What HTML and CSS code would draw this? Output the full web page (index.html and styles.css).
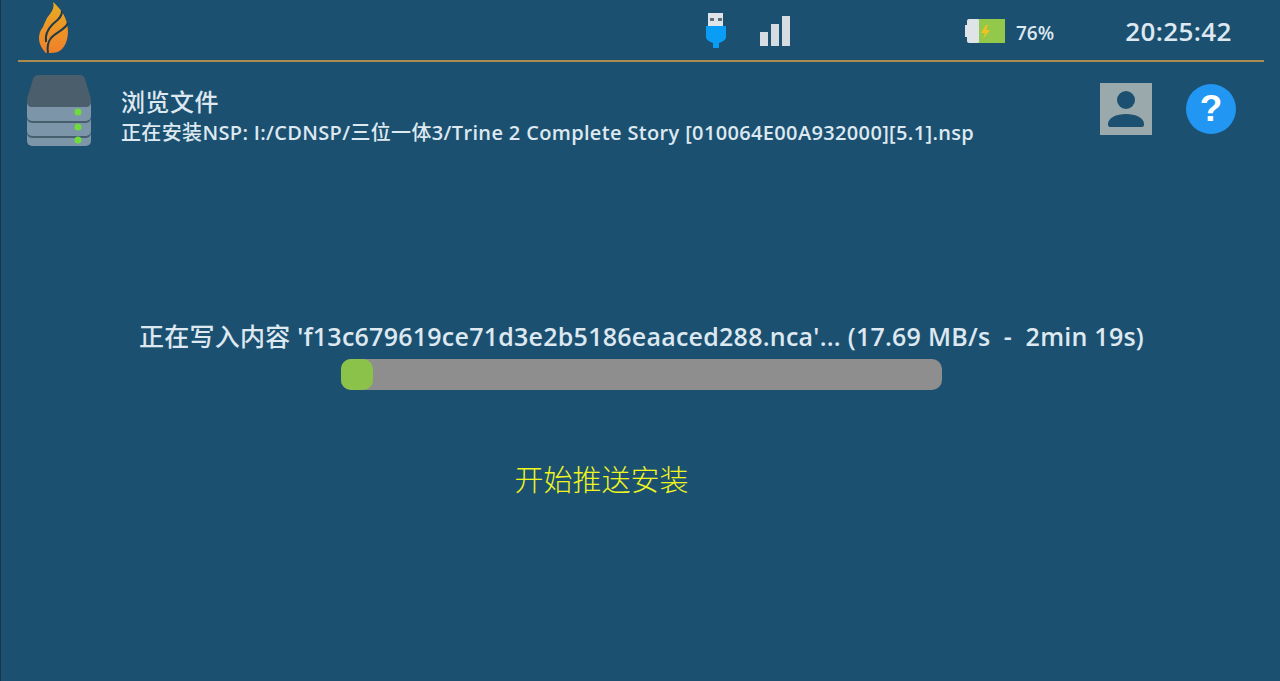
FILE: index.html
```html
<!DOCTYPE html>
<html lang="en">
<head>
    <meta charset="UTF-8">
    <meta name="viewport" content="width=device-width, initial-scale=1.0">
    <title>Install</title>
    <link rel="stylesheet" href="styles.css">
</head>
<body>
    <!-- Status bar -->
    <header class="status-bar">
        <svg class="logo" width="32" height="52" viewBox="0 0 32 52">
            <defs>
                <linearGradient id="flame" x1="0" y1="0" x2="0" y2="1">
                    <stop offset="0" stop-color="#e8ac22"/>
                    <stop offset="1" stop-color="#f0802a"/>
                </linearGradient>
            </defs>
            <path d="M15 0C17 6 13 11 9 16C7 20 6 22 5 25C2 29 1 32 1 36C1 42 4 47 8 51H12C17 51 21 50 24 47C30 41 31 30 29 22C28 14 21 5 15 0Z" fill="url(#flame)"/>
            <path d="M24 9C24 16 18 19 14 23C9 28 7 33 8 40" fill="none" stroke="#1e3a4c" stroke-width="2"/>
            <path d="M30 21C27 28 18 30 13 36C10 40 9 45 10 51" fill="none" stroke="#1e3a4c" stroke-width="2"/>
        </svg>
        <svg class="usb" width="22" height="36" viewBox="0 0 22 36">
            <rect x="3" y="0" width="15" height="14" fill="#dfe4e8"/>
            <rect x="5" y="5" width="4" height="3" fill="#5f6f7a"/>
            <rect x="13" y="5" width="4" height="3" fill="#5f6f7a"/>
            <path d="M1 13H21V24C21 27 17 29 14 30V35H8V30C5 29 1 27 1 24Z" fill="#0a9df5"/>
        </svg>
        <div class="signal">
            <span class="signal-bar bar-low"></span>
            <span class="signal-bar bar-mid"></span>
            <span class="signal-bar bar-high"></span>
        </div>
        <svg class="battery" width="40" height="24" viewBox="0 0 40 24">
            <rect x="0" y="6" width="3" height="12" fill="#dfe4e8"/>
            <rect x="2" y="0" width="13" height="24" rx="2" fill="#dfe4e8"/>
            <rect x="14" y="0" width="26" height="24" fill="#93c94a"/>
            <path d="M21 6L16 14H20L18 20L25 11H21L23 6Z" fill="#f4c21f"/>
        </svg>
        <span class="battery-text">76%</span>
        <span class="clock">20:25:42</span>
    </header>

    <!-- Title row -->
    <section class="title-row">
        <svg class="drive" width="64" height="72" viewBox="0 0 64 72">
            <rect x="0" y="48" width="64" height="23" rx="5" fill="#7c95a8"/>
            <rect x="0" y="44" width="64" height="19" rx="5" fill="#465e6e"/>
            <rect x="0" y="38" width="64" height="23" rx="5" fill="#7c95a8"/>
            <rect x="0" y="30" width="64" height="18" rx="5" fill="#465e6e"/>
            <rect x="0" y="24" width="64" height="22" rx="5" fill="#7c95a8"/>
            <path d="M11 0H53C55 0 57 1 58 4L64 24V27C64 30 62 32 59 32H5C2 32 0 30 0 27V24L6 4C7 1 9 0 11 0Z" fill="#4a5e6c"/>
            <circle cx="51" cy="37" r="3.5" fill="#6fdc3c"/>
            <circle cx="51" cy="52" r="3.5" fill="#6fdc3c"/>
            <circle cx="51" cy="65" r="3.5" fill="#6fdc3c"/>
        </svg>
        <div class="title-text">
            <div class="title-main"><span class="cjk">浏览文件</span></div>
            <div class="title-sub"><span class="cjk">正在安装</span>NSP: I:/CDNSP/<span class="cjk">三位一体</span>3/Trine 2 Complete Story [010064E00A932000][5.1].nsp</div>
        </div>
        <div class="avatar">
            <svg width="52" height="52" viewBox="0 0 52 52">
                <circle cx="26" cy="17" r="9" fill="#1c5070"/>
                <path d="M8 41C8 35 16 31 26 31C36 31 44 35 44 41V42C44 43 43 44 42 44H10C9 44 8 43 8 42Z" fill="#1c5070"/>
            </svg>
        </div>
        <div class="help">?</div>
    </section>

    <!-- Progress -->
    <main class="progress-area">
        <div class="progress-text"><span class="cjk">正在写入内容</span> 'f13c679619ce71d3e2b5186eaaced288.nca'... (17.69 MB/s &nbsp;-&nbsp; 2min 19s)</div>
        <div class="progress-track">
            <div class="progress-fill"></div>
        </div>
        <div class="push-text">开始推送安装</div>
    </main>
</body>
</html>
```

FILE: styles.css
```css
* {
    margin: 0;
    padding: 0;
    box-sizing: border-box;
}

body {
    width: 1280px;
    height: 681px;
    overflow: hidden;
    background: #1c5070;
    border-left: 1px solid #16384e;
    color: #dde8f0;
    font-family: "Open Sans", "Noto Sans CJK SC", sans-serif;
}

.cjk {
    font-family: "Noto Sans CJK SC", sans-serif;
    font-weight: 500;
}

/* Status bar */
.status-bar {
    display: flex;
    align-items: center;
    height: 62px;
    margin: 0 16px 0 17px;
    border-bottom: 2px solid #a98c4e;
}

.logo {
    margin-left: 20px;
    margin-top: -4px;
}

.usb {
    margin-left: 635px;
    margin-top: 1px;
}

.signal {
    display: flex;
    align-items: flex-end;
    gap: 3px;
    margin-left: 33px;
    margin-top: 1px;
    height: 30px;
}

.signal-bar {
    width: 8px;
    background: #d5dde3;
}

.bar-low { height: 14px; }
.bar-mid { height: 22px; }
.bar-high { height: 30px; }

.battery {
    margin-left: 175px;
    margin-top: 2px;
}

.battery-text {
    margin-left: 11px;
    margin-top: 6px;
    font-size: 19px;
    font-weight: 600;
}

.clock {
    margin-left: 71px;
    margin-top: 1px;
    font-size: 26px;
    font-weight: 600;
    letter-spacing: 0.4px;
}

/* Title row */
.title-row {
    display: flex;
    align-items: flex-start;
    padding: 13px 44px 0 26px;
}

.title-text {
    flex: 1;
    margin-left: 30px;
    margin-top: 11px;
}

.title-main {
    font-size: 24px;
    letter-spacing: 0.5px;
    line-height: 30px;
}

.title-sub {
    margin-top: 1px;
    font-size: 20px;
    font-weight: 600;
    letter-spacing: 0.35px;
    line-height: 28px;
}

.avatar {
    width: 52px;
    height: 52px;
    margin-top: 8px;
    background: #9aa9ab;
}

.help {
    width: 50px;
    height: 50px;
    margin-left: 34px;
    margin-top: 9px;
    border-radius: 50%;
    background: #2196f3;
    color: #fff;
    font-family: "Liberation Sans", sans-serif;
    font-size: 37px;
    font-weight: bold;
    line-height: 50px;
    text-align: center;
}

/* Progress */
.progress-area {
    display: flex;
    flex-direction: column;
    align-items: center;
    padding-top: 171px;
    padding-left: 2px;
}

.progress-text {
    font-size: 25px;
    font-weight: 600;
    letter-spacing: 0.25px;
    line-height: 34px;
    white-space: nowrap;
}

.progress-track {
    width: 601px;
    height: 31px;
    margin-top: 6px;
    border-radius: 10px;
    background: #8e8e8e;
}

.progress-fill {
    width: 32px;
    height: 31px;
    border-radius: 10px;
    background: #8bc34a;
}

.push-text {
    margin-top: 68px;
    margin-right: 80px;
    color: #eef51f;
    font-family: "Noto Sans CJK SC", sans-serif;
    font-size: 29px;
    font-weight: 300;
    line-height: 40px;
}
```
